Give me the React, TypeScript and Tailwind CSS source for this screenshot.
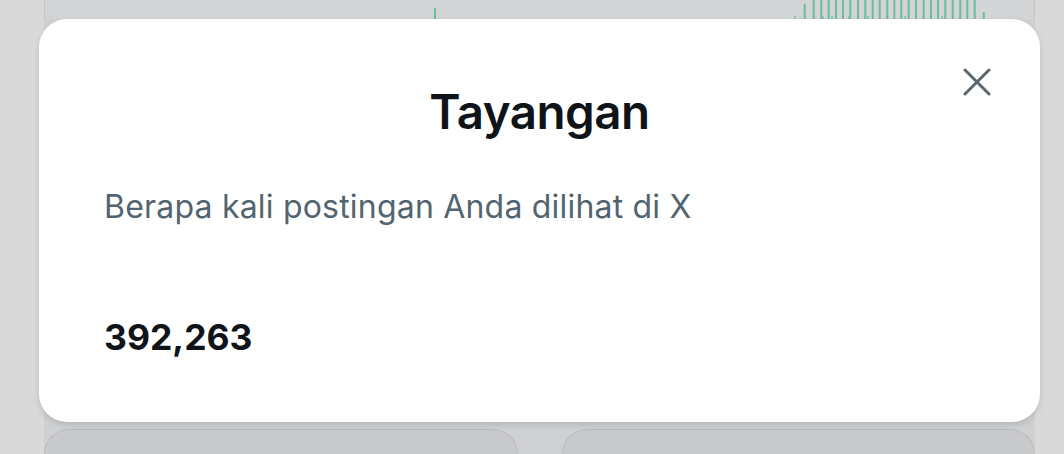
import React from "react";

const bars = [
  { x: 758.7, y: 4 },
  { x: 767.7, y: 0 },
  { x: 775.3, y: 0 },
  { x: 782.7, y: 0 },
  { x: 790, y: 0 },
  { x: 797, y: 0 },
  { x: 804.3, y: 0 },
  { x: 812, y: 0 },
  { x: 819.3, y: 0 },
  { x: 826.7, y: 0 },
  { x: 833.7, y: 0 },
  { x: 841.3, y: 0 },
  { x: 848.3, y: 0 },
  { x: 855.3, y: 0 },
  { x: 862.7, y: 0 },
  { x: 870, y: 0 },
  { x: 877.7, y: 0 },
  { x: 885, y: 0 },
  { x: 892, y: 0 },
  { x: 899.3, y: 0 },
  { x: 906.7, y: 0 },
  { x: 914.3, y: 0 },
  { x: 921.3, y: 0 },
  { x: 928.7, y: 0 },
  { x: 937.7, y: 12 },
];

const ChartStrip = () => (
  <svg width="989" height="19" className="block">
    <rect x="389" y="8" width="2" height="11" fill="#6bbd9c" />
    {[749, 768, 777, 786, 803, 822, 841, 859, 877, 896, 914].map((x) => (
      <rect key={x} x={x} y="16" width="2" height="3" fill="#8fc7b0" />
    ))}
    {bars.map((b, i) => (
      <rect key={i} x={b.x} y={b.y} width="2" height={19 - b.y} fill="#6bbd9c" />
    ))}
  </svg>
);

const App = () => {
  return (
    <div
      className="relative h-[454px] w-[1064px] overflow-hidden bg-[#d9d9da]"
      style={{ fontFamily: "Inter, 'Noto Sans', sans-serif" }}
    >
      {/* page behind the dimmed backdrop */}
      <div className="ml-[44px] flex h-full w-[991px] flex-col">
        <div className="h-[19px] border-x border-[#c3c5c7] bg-[#d3d4d6]">
          <ChartStrip />
        </div>
        <div className="h-[410px] bg-[#cfd0d2]" />
        <div className="grid flex-1 grid-cols-2 gap-[44px] bg-[#cfd0d2]">
          <div className="rounded-t-[26px] border border-b-0 border-[#b9bbbd] bg-[#c9cacc]" />
          <div className="rounded-t-[26px] border border-b-0 border-[#b9bbbd] bg-[#c9cacc]" />
        </div>
      </div>

      {/* modal */}
      <div className="absolute left-[39px] top-[19px] h-[403px] w-[1001px] rounded-[28px] bg-white shadow-[0_3px_6px_rgba(0,0,0,0.12)]">
        <button
          type="button"
          className="absolute right-[47px] top-[47px] flex h-[32px] w-[32px] items-center justify-center"
        >
          <svg width="28" height="28" viewBox="0 0 28 28" fill="none">
            <path d="M2 2L26 26M26 2L2 26" stroke="#5b6770" strokeWidth="3" strokeLinecap="round" />
          </svg>
        </button>
        <div className="flex flex-col px-[65px] pt-[63px]">
          <h2 className="text-center text-[47.5px] font-semibold leading-[60px] tracking-[-0.5px] text-[#0f1419]">
            Tayangan
          </h2>
          <p className="mt-[45px] text-[32px] leading-[40px] tracking-[0.2px] text-[#536471]">
            Berapa kali postingan Anda dilihat di X
          </p>
          <p className="mt-[89px] text-[35.5px] font-bold leading-[44px] text-[#0f1419]">
            392,263
          </p>
        </div>
      </div>
    </div>
  );
};

export default App;
